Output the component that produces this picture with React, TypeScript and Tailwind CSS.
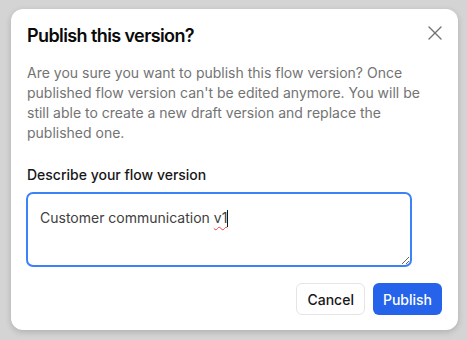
import { X } from "lucide-react";

export default function App() {
  return (
    <div className="w-[467px] h-[340px] bg-[#d4d4d4] pt-[9px] pl-[11px] font-['Inter',sans-serif]">
      <div className="relative w-[447px] h-[321px] bg-white rounded-[12px] shadow-[0_2px_6px_rgba(0,0,0,0.18)] px-4 pt-[16px] pb-[15px] flex flex-col">
        <h2 className="text-[18px] leading-[22px] font-semibold text-[#0a0a0a] tracking-[-0.6px]">Publish this version?</h2>
        <button className="absolute top-[12px] right-[11px] text-[#737373]">
          <X size={24} strokeWidth={1.4} />
        </button>
        <p className="mt-[16px] text-[14px] leading-[20px] text-[#737373]">
          Are you sure you want to publish this flow version? Once published flow version can't be edited anymore. You will be still able to create a new draft version and replace the published one.
        </p>
        <label className="mt-[22px] text-[14px] leading-[20px] font-medium text-[#171717]">Describe your flow version</label>
        <div className="mt-[7px] -ml-px w-[386px] h-[75px] rounded-[7px] border-2 border-[#3b82f6] px-[12px] pt-[14px] resize overflow-auto text-[14px] leading-[20px] text-[#404040]">
          Customer communication{" "}
          <span className="underline decoration-wavy decoration-[#ef4444] decoration-1 underline-offset-[3px]">v1</span>
          <span className="inline-block w-[1px] h-[17px] bg-[#171717] align-[-4px]" />
        </div>
        <div className="mt-auto flex justify-end gap-2">
          <button className="h-[32px] px-[10px] rounded-[6px] border border-[#e5e5e5] bg-white text-[14px] font-medium text-[#171717]">Cancel</button>
          <button className="h-[32px] px-[10px] rounded-[6px] bg-[#2563eb] text-[14px] font-medium text-white">Publish</button>
        </div>
      </div>
    </div>
  );
}
